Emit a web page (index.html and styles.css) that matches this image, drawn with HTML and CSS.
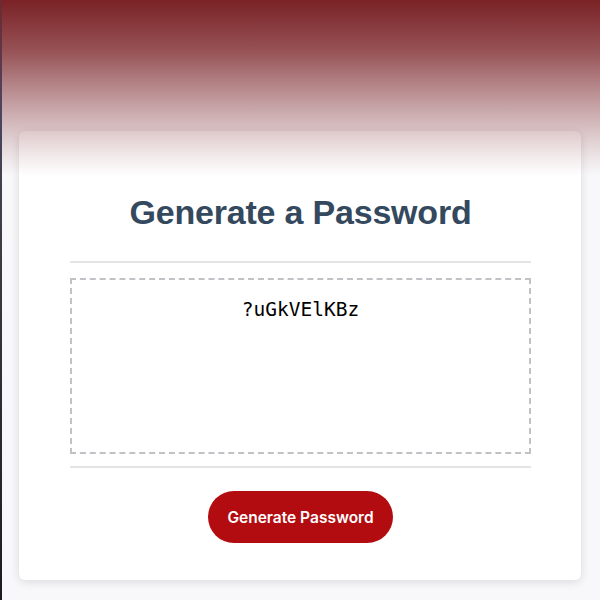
FILE: index.html
```html
<!DOCTYPE html>
<html lang="en">
<head>
<meta charset="utf-8">
<title>Password Generator</title>
<link rel="stylesheet" href="styles.css">
</head>
<body>
<div class="edge"></div>
<div class="shade"></div>
<main class="wrapper">
  <section class="card">
    <h2 class="card-title">Generate a Password</h2>
    <div class="card-body">
      <div class="password">?uGkVElKBz</div>
    </div>
    <div class="card-footer">
      <button class="btn">Generate Password</button>
    </div>
  </section>
</main>
</body>
</html>
```
FILE: styles.css
```css
html, body {
  margin: 0;
  padding: 0;
  height: 100%;
}
body {
  background: #f8f8fa;
  font-family: "Liberation Sans", Arial, sans-serif;
  position: relative;
  overflow: hidden;
}
.edge {
  position: absolute;
  left: 0;
  top: 0;
  width: 2px;
  height: 600px;
  background: linear-gradient(#6d2a30 0%, #4a4660 18%, #3a3a3e 45%, #1c1c20 100%);
  z-index: 3;
}
.shade {
  position: absolute;
  left: 0;
  top: 0;
  width: 100%;
  height: 176px;
  pointer-events: none;
  z-index: 2;
  background: linear-gradient(
    rgba(122, 34, 38, 1) 0px,
    rgba(122, 34, 38, 0.78) 50px,
    rgba(122, 34, 38, 0.44) 100px,
    rgba(122, 34, 38, 0.25) 130px,
    rgba(122, 34, 38, 0.1) 155px,
    rgba(122, 34, 38, 0) 176px
  );
}
.wrapper {
  padding: 131px 19px 0 19px;
}
.card {
  background: #fff;
  border-radius: 6px;
  box-shadow: 0 2px 10px rgba(0, 0, 0, 0.12);
  padding: 0 50px 38px 51px;
  height: 449px;
  box-sizing: border-box;
}
.card-title {
  margin: 0;
  padding: 61px 0 29px 0;
  text-align: center;
  font-size: 34px;
  line-height: 40px;
  font-weight: 700;
  letter-spacing: -0.2px;
  color: #34495e;
  border-bottom: 2px solid #e4e4e6;
  margin-bottom: 15px;
}
.card-body {
  border: 2px dashed #c0c2c6;
  height: 176px;
  box-sizing: border-box;
  padding-top: 18px;
  text-align: center;
}
.password {
  font-family: "DejaVu Sans Mono", monospace;
  font-size: 19.5px;
  line-height: 24px;
  color: #000;
}
.card-footer {
  margin-top: 12px;
  border-top: 2px solid #e4e4e6;
  padding-top: 23px;
  text-align: center;
}
.btn {
  background: #b30c10;
  color: #fff;
  border: none;
  border-radius: 26px;
  width: 185px;
  height: 52px;
  font-family: Inter, "Liberation Sans", sans-serif;
  font-weight: 600;
  font-size: 15.5px;
  cursor: pointer;
}
```
